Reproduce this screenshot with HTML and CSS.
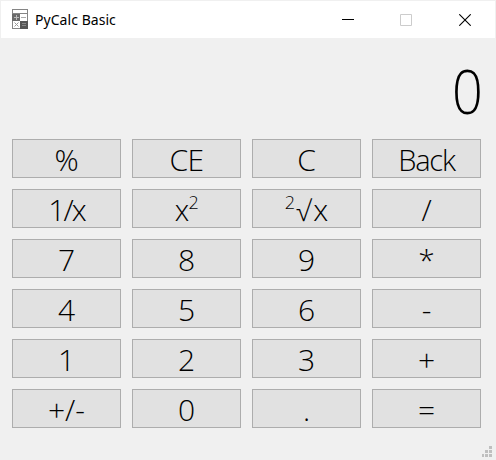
FILE: index.html
```html
<!DOCTYPE html>
<html lang="en">
<head>
<meta charset="utf-8">
<title>PyCalc Basic</title>
<link rel="stylesheet" href="styles.css">
</head>
<body>
<div class="window">
  <header class="titlebar">
    <svg class="app-icon" width="16" height="20" viewBox="0 0 16 20" shape-rendering="crispEdges">
      <rect width="16" height="20" fill="#858585"/>
      <rect x="1" y="1" width="14" height="3" fill="#fff"/>
      <rect y="5" width="8" height="7" fill="#6a6a6a"/>
      <rect x="8" y="5" width="7" height="7" fill="#fff"/>
      <rect x="1" y="12" width="7" height="7" fill="#fff"/>
      <rect x="8" y="12" width="8" height="8" fill="#555"/>
      <rect x="2" y="8" width="5" height="1" fill="#bbb"/>
      <rect x="4" y="6" width="1" height="5" fill="#bbb"/>
      <rect x="9" y="8" width="5" height="1" fill="#aaa"/>
      <path d="M2.500 13.500l4 4M6.500 13.500l-4 4" stroke="#999" shape-rendering="auto"/>
      <rect x="10" y="14" width="4" height="1" fill="#888"/>
      <rect x="10" y="16" width="4" height="1" fill="#888"/>
    </svg>
    <span class="title">PyCalc Basic</span>
    <div class="controls">
      <svg width="12" height="12" viewBox="0 0 12 12"><path d="M0 5.500h12" stroke="#000"/></svg>
      <svg width="12" height="12" viewBox="0 0 12 12"><path d="M.5.5h11v11H.5z" fill="none" stroke="#ccc"/></svg>
      <svg class="close" width="12" height="12" viewBox="0 0 12 12"><path d="M.3.3l11.400 11.400M11.700.3L.3 11.700" stroke="#000" stroke-width="1.100"/></svg>
    </div>
  </header>
  <output class="display"><span class="value">0</span></output>
  <main class="keys">
    <button>%</button><button class="clear">CE</button><button>C</button><button class="back">Back</button>
    <button class="inverse">1/x</button><button class="square">x<sup>2</sup></button><button class="square-root"><sup>2</sup><span class="root">√</span>x</button><button>/</button>
    <button>7</button><button>8</button><button>9</button><button>*</button>
    <button>4</button><button>5</button><button>6</button><button>-</button>
    <button>1</button><button>2</button><button>3</button><button>+</button>
    <button>+/-</button><button>0</button><button>.</button><button>=</button>
  </main>
  <svg class="grip" width="11" height="11" viewBox="0 0 11 11" fill="#bfbfbf" shape-rendering="crispEdges">
    <path d="M7 0h3v3h-3zM3 4h3v3h-3zM7 4h3v3h-3zM0 8h2v3h-2zM3 8h3v3h-3zM7 8h3v3h-3z"/>
  </svg>
</div>
</body>
</html>
```
FILE: styles.css
```css
* { box-sizing: border-box; }
body { margin: 0; background: #f0f0f0; color: #000; font-family: "Open Sans", sans-serif; }
.window {
  display: flex;
  flex-direction: column;
  width: 496px;
  height: 460px;
  padding: 1px 1px 0;
  overflow: hidden;
}
.titlebar {
  display: flex;
  align-items: center;
  height: 37px;
  padding: 0 24px 1px 11px;
  background: #fff;
}
.app-icon { flex: none; margin-right: 7px; }
.title { margin-top: 1px; font-family: "Noto Sans", sans-serif; font-size: 14px; letter-spacing: 0.05px; }
.controls { display: flex; gap: 46px; margin: 1px 0 0 auto; }
.controls svg { display: block; }
.controls .close { margin-left: 1px; }
.display {
  height: 101px;
  padding: 8px 12px 0 0;
  font-size: 60px;
  font-weight: 300;
  line-height: 90px;
  text-align: right;
}
.value { display: inline-block; transform: scaleX(0.9); transform-origin: 90% 50%; }
.keys {
  display: grid;
  grid-template-columns: repeat(4, 109px);
  grid-auto-rows: 39px;
  gap: 11px;
  padding-left: 11px;
}
.keys button {
  padding: 3px 0 0;
  border: 1px solid #adadad;
  background: #e1e1e1;
  color: #000;
  font: 300 30px/34px "Open Sans", sans-serif;
  white-space: nowrap;
}
.keys .clear { letter-spacing: -0.7px; }
.keys .back { font-size: 29px; letter-spacing: -1.200px; }
.keys .inverse { letter-spacing: -2px; }
.keys sup { font-size: 18px; line-height: 0; vertical-align: 12px; font-weight: 300; }
.keys .square { font-size: 29px; letter-spacing: -0.5px; }
.root { margin: 0 2px 0 1px; font-size: 28px; }
.grip { align-self: flex-end; margin: 18px 2px 0 0; }
```
